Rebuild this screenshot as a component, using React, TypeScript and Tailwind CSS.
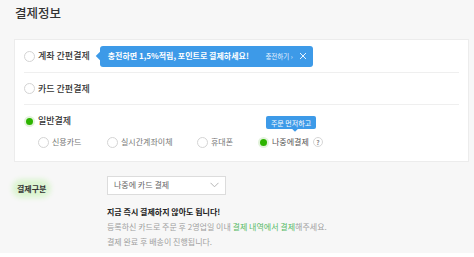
import React from 'react'

const font = "font-['Noto_Sans_CJK_KR','Noto_Sans',sans-serif]"

function Radio({ checked = false }: { checked?: boolean }) {
  if (checked) {
    return (
      <span className="flex h-[11px] w-[11px] shrink-0 items-center justify-center rounded-full bg-[#e3f3dc]">
        <span className="h-[7px] w-[7px] rounded-full bg-[#2db400]" />
      </span>
    )
  }
  return <span className="h-[11px] w-[11px] shrink-0 rounded-full border border-[#d4d4d4] bg-white" />
}

function SubOption({ label, width, checked }: { label: string; width: string; checked?: boolean }) {
  return (
    <div className={`flex items-center gap-[3px] ${width}`}>
      <Radio checked={checked} />
      <span className="text-[8px] leading-[12px] text-[#777]">{label}</span>
    </div>
  )
}

export default function App() {
  return (
    <div className={`${font} h-[253px] w-[474px] bg-[#f7f7f7] px-[15px] pt-[5px] text-[#333]`}>
      <h2 className="text-[12.5px] font-medium leading-[16px] text-[#333]">결제정보</h2>

      <div className="mt-[18px] w-[455px] -translate-x-[1px] border border-[#ececec] bg-white px-[9px]">
        {/* 계좌 간편결제 */}
        <div className="flex h-[33px] items-center border-b border-[#efefef]">
          <Radio />
          <span className="ml-[3px] text-[9px] font-medium leading-[12px]">계좌 간편결제</span>
          <div className="relative ml-[10px] flex h-[21px] w-[213px] items-center rounded-[3px] bg-[#3d9ae8] pl-[8px] pr-[6px] text-white">
            <span className="absolute -left-[3px] top-[7px] h-[6px] w-[6px] rotate-45 bg-[#3d9ae8]" />
            <span className="text-[8px] font-bold leading-[12px]">충전하면 1,5%적립, 포인트로 결제하세요!</span>
            <span className="ml-auto text-[6.5px] leading-[10px] text-[#e6f2ff]">충전하기 ›</span>
            <svg className="ml-[6px]" width="8" height="8" viewBox="0 0 8 8" fill="none" stroke="#e8f3ff" strokeWidth="1">
              <path d="M1 1l6 6M7 1L1 7" />
            </svg>
          </div>
        </div>

        {/* 카드 간편결제 */}
        <div className="flex h-[32px] items-center border-b border-[#efefef]">
          <Radio />
          <span className="ml-[3px] text-[9px] font-medium leading-[12px]">카드 간편결제</span>
        </div>

        {/* 일반결제 */}
        <div className="pb-[13px] pt-[10px]">
          <div className="flex items-center">
            <Radio checked />
            <span className="ml-[3px] text-[9px] font-medium leading-[12px]">일반결제</span>
          </div>
          <div className="mt-[9px] flex items-center pl-[14px]">
            <SubOption label="신용카드" width="w-[69px]" />
            <SubOption label="실시간계좌이체" width="w-[90px]" />
            <SubOption label="휴대폰" width="w-[61px]" />
            <div className="relative flex items-center gap-[3px]">
              <div className="absolute bottom-[19px] left-[8px] flex h-[13px] w-[50px] items-center justify-center rounded-[2px] bg-[#3d9ae8]">
                <span className="text-[7px] leading-[10px] text-white">주문 먼저하고</span>
                <span className="absolute -bottom-[2px] left-[27px] h-[4px] w-[4px] rotate-45 bg-[#3d9ae8]" />
              </div>
              <Radio checked />
              <span className="text-[8px] leading-[12px] text-[#555]">나중에결제</span>
              <span className="ml-[1px] flex h-[10px] w-[10px] items-center justify-center rounded-full border border-[#d6d6d6] text-[6.5px] font-bold leading-none text-[#888]">
                ?
              </span>
            </div>
          </div>
        </div>
      </div>

      {/* 결제구분 */}
      <div className="mt-[11px] flex items-center">
        <div className="w-[92px]">
          <span className="rounded-full bg-[#dcf4d2] px-[2px] py-[1px] text-[8px] font-bold leading-[12px] text-[#333] shadow-[0_0_5px_3px_#dcf4d2]">
            결제구분
          </span>
        </div>
        <div className="flex h-[19px] w-[119px] items-center justify-between border border-[#dcdcdc] bg-white pl-[6px] pr-[6px]">
          <span className="text-[8px] leading-[12px] text-[#666]">나중에 카드 결제</span>
          <svg width="9" height="6" viewBox="0 0 9 6" fill="none" stroke="#b5b5b5" strokeWidth="1">
            <path d="M0.5 0.8L4.5 4.8L8.5 0.8" />
          </svg>
        </div>
      </div>

      <div className="ml-[92px] mt-[7px] text-[8px] leading-[15px]">
        <p className="font-bold text-[#222]">지금 즉시 결제하지 않아도 됩니다!</p>
        <p className="text-[#a0a0a0]">
          등록하신 카드로 주문 후 2영업일 이내 <span className="text-[#58bb66]">결제 내역에서 결제</span>해주세요.
        </p>
        <p className="text-[#a0a0a0]">결제 완료 후 배송이 진행됩니다.</p>
      </div>
    </div>
  )
}
